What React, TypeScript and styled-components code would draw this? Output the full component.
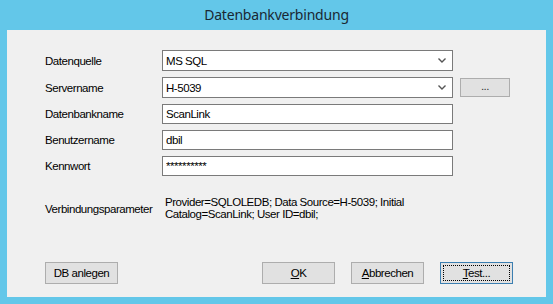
import React from "react";
import styled, { createGlobalStyle } from "styled-components";

const Global = createGlobalStyle`
  html, body { margin: 0; padding: 0; }
  body { background: #63c7e9; overflow: hidden; }
`;

const Window = styled.div`
  width: 553px;
  height: 304px;
  background: #63c7e9;
  display: flex;
  flex-direction: column;
  box-sizing: border-box;
`;

const TitleBar = styled.div`
  height: 30px;
  display: flex;
  align-items: center;
  justify-content: center;
  font-family: "Noto Sans", "Open Sans", sans-serif;
  font-size: 14px;
  letter-spacing: -0.2px;
  color: #1a2733;
  padding-bottom: 1px;
  box-sizing: border-box;
`;

const Client = styled.div`
  flex: 1;
  margin: 0 7px 7px 7px;
  background: #f0f0f0;
  display: flex;
  flex-direction: column;
  padding: 20px 33px 13px 38px;
  font-family: "Liberation Sans", Arial, sans-serif;
  font-size: 11.5px;
  letter-spacing: -0.45px;
  color: #000;
`;

const FormGrid = styled.div`
  display: grid;
  grid-template-columns: 110px 291px 50px;
  column-gap: 7px;
  row-gap: 6px;
  align-items: center;
`;

const Label = styled.div`
  white-space: nowrap;
`;

const Combo = styled.div`
  height: 21px;
  box-sizing: border-box;
  border: 1px solid #7a7a7a;
  background: #fff;
  display: flex;
  align-items: center;
  justify-content: space-between;
  padding: 0 6px 0 3px;
`;

const TextBox = styled.input`
  height: 20px;
  width: 291px;
  box-sizing: border-box;
  border: 1px solid #7a7a7a;
  background: #fff;
  margin: 0;
  padding: 0 3px;
  font: inherit;
  letter-spacing: inherit;
  color: #000;
  outline: none;
`;

const SmallButton = styled.div`
  height: 19px;
  box-sizing: border-box;
  border: 1px solid #adadad;
  background: #e1e1e1;
  display: flex;
  align-items: center;
  justify-content: center;
  padding-bottom: 3px;
  color: #333;
`;

const ParamRow = styled.div`
  display: flex;
  align-items: center;
  margin-top: 20px;
`;

const ParamLabel = styled.div`
  width: 120px;
  flex: none;
  white-space: nowrap;
  padding-top: 2px;
`;

const ParamText = styled.div`
  line-height: 12px;
`;

const Spacer = styled.div`
  flex: 1;
`;

const ButtonRow = styled.div`
  display: flex;
  align-items: center;
`;

const RightGroup = styled.div`
  margin-left: auto;
  display: flex;
  gap: 16px;
`;

const Button = styled.div<{ $focused?: boolean }>`
  position: relative;
  width: 73px;
  height: 22px;
  box-sizing: border-box;
  border: 1px solid ${(p) => (p.$focused ? "#3c7fb1" : "#adadad")};
  background: #e1e1e1;
  display: flex;
  align-items: center;
  justify-content: center;
  &::after {
    content: "";
    display: ${(p) => (p.$focused ? "block" : "none")};
    position: absolute;
    inset: 2px;
    border: 1px dotted #000;
  }
`;

const Mnemonic = styled.span`
  text-decoration: underline;
`;

const Chevron = () => (
  <svg width="8" height="5" viewBox="0 0 8 5">
    <path d="M0.5 0.5 L4 4 L7.5 0.5" fill="none" stroke="#555" strokeWidth="1.4" />
  </svg>
);

export default function App() {
  return (
    <>
      <Global />
      <Window>
        <TitleBar>Datenbankverbindung</TitleBar>
        <Client>
          <FormGrid>
            <Label>Datenquelle</Label>
            <Combo>
              <span>MS SQL</span>
              <Chevron />
            </Combo>
            <div />
            <Label>Servername</Label>
            <Combo>
              <span>H-5039</span>
              <Chevron />
            </Combo>
            <SmallButton>...</SmallButton>
            <Label>Datenbankname</Label>
            <TextBox readOnly value="ScanLink" />
            <div />
            <Label>Benutzername</Label>
            <TextBox readOnly value="dbil" />
            <div />
            <Label>Kennwort</Label>
            <TextBox readOnly value="**********" />
            <div />
          </FormGrid>
          <ParamRow>
            <ParamLabel>Verbindungsparameter</ParamLabel>
            <ParamText>
              Provider=SQLOLEDB; Data Source=H-5039; Initial
              <br />
              Catalog=ScanLink; User ID=dbil;
            </ParamText>
          </ParamRow>
          <Spacer />
          <ButtonRow>
            <Button>DB anlegen</Button>
            <RightGroup>
              <Button>
                <span>
                  <Mnemonic>O</Mnemonic>K
                </span>
              </Button>
              <Button>
                <span>
                  <Mnemonic>A</Mnemonic>bbrechen
                </span>
              </Button>
              <Button $focused>
                <span>
                  <Mnemonic>T</Mnemonic>est...
                </span>
              </Button>
            </RightGroup>
          </ButtonRow>
        </Client>
      </Window>
    </>
  );
}
